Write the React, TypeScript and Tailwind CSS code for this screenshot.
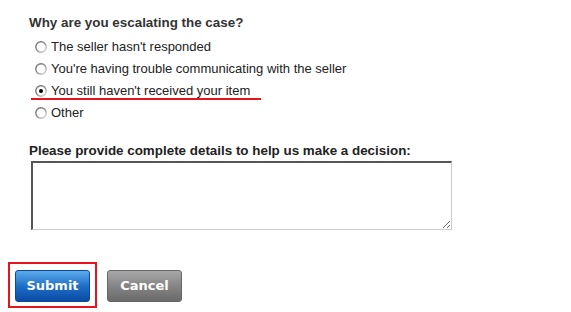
import React from "react";

const options = [
  "The seller hasn't responded",
  "You're having trouble communicating with the seller",
  "You still haven't received your item",
  "Other",
];

function Radio({ checked }: { checked?: boolean }) {
  return (
    <svg width="12" height="12" viewBox="0 0 12 12" className="shrink-0">
      <defs>
        <linearGradient id="rim" x1="0" y1="0" x2="1" y2="1">
          <stop offset="0" stopColor="#6b6b6b" />
          <stop offset="0.5" stopColor="#8a8a8a" />
          <stop offset="1" stopColor="#e2e2e2" />
        </linearGradient>
      </defs>
      <circle cx="6" cy="6" r="5.2" fill="#fff" stroke="url(#rim)" strokeWidth="1.4" />
      {checked && <circle cx="6" cy="6" r="2" fill="#000" />}
    </svg>
  );
}

export default function App() {
  return (
    <div className="h-[312px] w-[571px] overflow-hidden bg-white pl-[8px] pt-[15px] font-['Liberation_Sans',Arial,sans-serif] text-[13px] text-[#222]">
      <div className="pl-[21px]">
        <p className="text-[13.4px] font-bold leading-[16px] text-[#333]">Why are you escalating the case?</p>
        <ul className="mt-[5px]">
          {options.map((label, i) => (
            <li key={label} className="relative flex h-[22px] items-center gap-[4px] pl-[6px]">
              <Radio checked={i === 2} />
              <span className="leading-[16px]">{label}</span>
              {i === 2 && (
                <span className="absolute left-[2px] top-[18px] h-[2px] w-[230px] bg-[#e8141c]" />
              )}
            </li>
          ))}
        </ul>

        <p className="mt-[19px] text-[13.4px] font-bold leading-[16px] text-[#222]">
          Please provide complete details to help us make a decision:
        </p>
        <textarea className="ml-[2px] mt-[2px] block h-[69px] w-[421px] resize border-t-2 border-l-2 border-r border-b border-t-[#555] border-l-[#555] border-r-[#ccc] border-b-[#ccc] bg-white outline-none" />
      </div>

      <div className="mt-[32px] flex items-start gap-[10px]">
        <div className="border-2 border-[#e8141c] px-[5px] pb-[4px] pt-[6px]">
          <button className="flex h-[32px] w-[75px] items-center justify-center rounded-[3px] border border-[#0b4a9a] bg-gradient-to-b from-[#5aaaea] via-[#1f70c8] to-[#0a4aa4] font-['DejaVu_Sans',Verdana,sans-serif] text-[13px] font-bold text-white">
            Submit
          </button>
        </div>
        <button className="mt-[8px] flex h-[32px] w-[75px] items-center justify-center rounded-[3px] border border-[#666] bg-gradient-to-b from-[#a8a8a8] via-[#858585] to-[#6a6a6a] font-['DejaVu_Sans',Verdana,sans-serif] text-[13px] font-bold text-white">
          Cancel
        </button>
      </div>
    </div>
  );
}
